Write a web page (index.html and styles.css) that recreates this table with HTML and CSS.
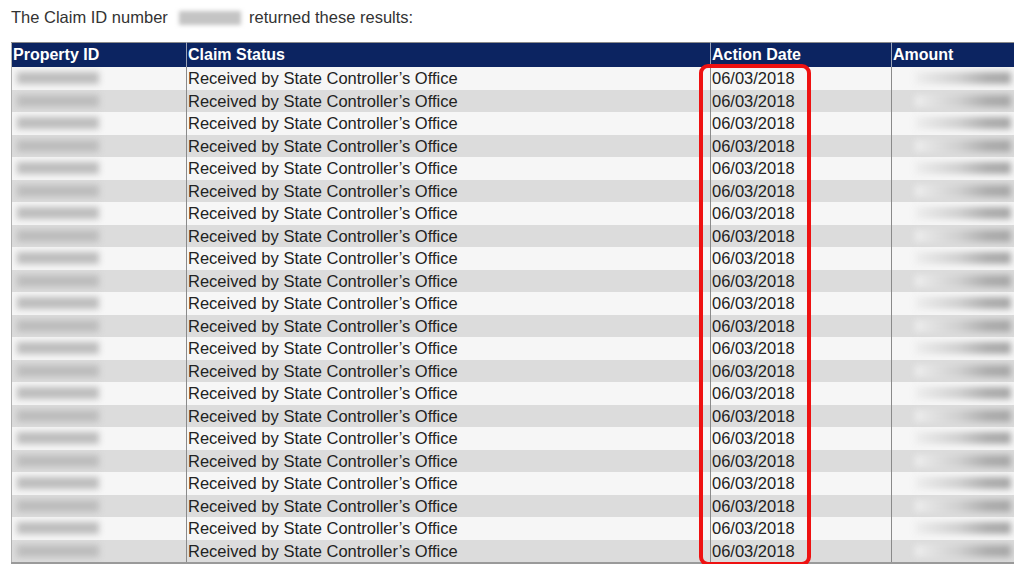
FILE: index.html
```html
<!DOCTYPE html>
<html lang="en">
<head>
  <meta charset="UTF-8">
  <title>Claim Status</title>
  <link rel="stylesheet" href="styles.css">
</head>
<body>
  <p class="intro">The Claim ID number <span class="redacted"></span> returned these results:</p>

  <div class="results">
    <table class="claims">
      <thead>
        <tr>
          <th class="col-id">Property ID</th>
          <th class="col-status">Claim Status</th>
          <th class="col-date">Action Date</th>
          <th class="col-amount">Amount</th>
        </tr>
      </thead>
      <tbody id="rows"></tbody>
    </table>
    <div class="highlight"></div>
  </div>

  <script>
    var tbody = document.getElementById('rows');
    for (var i = 0; i < 22; i++) {
      var tr = document.createElement('tr');
      tr.innerHTML =
        '<td><span class="blur-id"></span></td>' +
        '<td>Received by State Controller\u2019s Office</td>' +
        '<td>06/03/2018</td>' +
        '<td class="amount"><span class="blur-amount"></span></td>';
      tbody.appendChild(tr);
    }
  </script>
</body>
</html>
```

FILE: styles.css
```css
body {
  margin: 0;
  padding: 0 8px 0 11px;
  font-family: "Liberation Sans", Arial, sans-serif;
  color: #222;
  background: #fff;
}

.intro {
  margin: 8px 0 0 0;
  font-size: 16.5px;
  line-height: 18px;
  color: #333;
}

.redacted {
  display: inline-block;
  width: 62px;
  height: 14px;
  margin: 0 3px 0 7px;
  vertical-align: -2px;
  background: #c4c4c4;
  filter: blur(2px);
}

.results {
  position: relative;
  margin-top: 16px;
  width: 1003px;
}

.claims {
  width: 100%;
  border-collapse: collapse;
  font-size: 16.5px;
  border-top: 1px solid #8a8a8a;
  border-bottom: 2px solid #9a9a9a;
  border-left: 1px solid #b0b0b0;
}

.claims th {
  background: #0c2461;
  color: #fff;
  text-align: left;
  font-size: 16px;
  font-weight: bold;
  height: 24px;
  padding: 0 1px;
  border-left: 1px solid #9aa3b8;
}

.claims th:first-child,
.claims td:first-child {
  border-left: none;
}

.col-id { width: 172px; }
.col-status { width: 521px; }
.col-date { width: 178px; }

.claims td {
  height: 22.5px;
  padding: 0 1px;
  line-height: 18px;
  border-left: 1px solid #8a8a8a;
  overflow: hidden;
  white-space: nowrap;
}

.claims tbody tr:nth-child(odd) td {
  background: #f6f6f6;
}

.claims tbody tr:nth-child(even) td {
  background: #dcdcdc;
}

.blur-id {
  display: block;
  width: 82px;
  height: 12px;
  margin-left: 4px;
  background: #bdbdbd;
  filter: blur(3px);
}

.amount {
  text-align: right;
}

.blur-amount {
  display: inline-block;
  width: 96px;
  height: 12px;
  margin-right: 2px;
  background: linear-gradient(to right, #eeeeee, #d0d0d0 45%, #adadad 75%, #a6a6a6);
  filter: blur(3px);
}

.highlight {
  position: absolute;
  left: 688px;
  top: 22px;
  width: 104px;
  height: 494px;
  border: 4px solid #ee1111;
  border-radius: 9px;
}
```
